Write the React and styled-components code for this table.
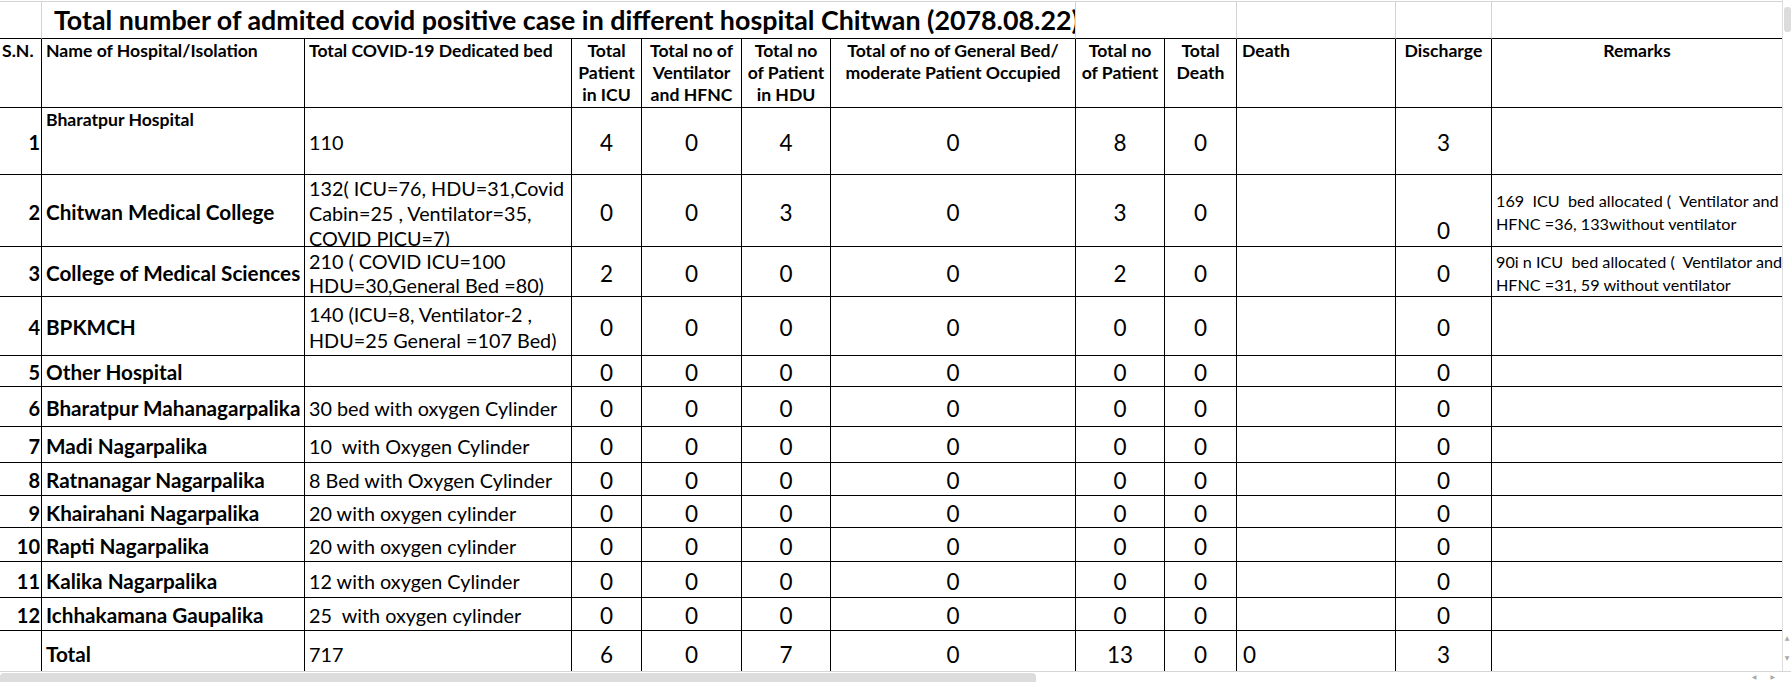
import React from 'react';
import styled, { createGlobalStyle } from 'styled-components';

const FONT = `Lato, "Open Sans", "Liberation Sans", sans-serif`;
const COLS = [42, 263, 267, 70, 100, 89, 245, 89, 72, 159, 96, 290];
const ROWS = [38, 69, 67, 72, 50, 59, 31, 40, 36, 33, 32, 34, 36, 33, 44];

const GlobalStyle = createGlobalStyle`
  html, body { margin: 0; padding: 0; background: #fff; }
  body { font-family: ${FONT}; color: #000; }
`;

const Sheet = styled.div`
  width: 1791px;
  height: 682px;
  display: flex;
  flex-direction: column;
  overflow: hidden;
  background: #fff;
`;

const Body = styled.div`
  flex: 1;
  min-height: 0;
  display: flex;
`;

const Grid = styled.div`
  width: 1782px;
  padding-top: 1px;
  display: grid;
  grid-template-columns: ${COLS.map((c) => c + 'px').join(' ')};
  grid-template-rows: ${ROWS.map((r) => r + 'px').join(' ')};
  align-content: start;
  overflow: hidden;
`;

const BaseCell = styled.div`
  box-sizing: border-box;
  overflow: hidden;
  white-space: pre;
  border-bottom: 1px solid #000;
  border-right: ${(p) => (p.$noRight ? 'none' : '1px solid #000')};
`;

const TitleGap = styled(BaseCell)`
  border-top: 1px solid #d4d4d4;
  border-right: ${(p) => (p.$noRight ? 'none' : '1px solid #d4d4d4')};
  grid-column: span ${(p) => p.$span || 1};
`;

const TitleCell = styled(TitleGap)`
  display: flex;
  align-items: center;
  padding-left: 12px;
  font-weight: 700;
  font-size: 26.8px;
`;

const HeadCell = styled(BaseCell)`
  font-weight: 700;
  font-size: 17.6px;
  line-height: 22px;
  padding: 1px ${(p) => p.$pad ?? 2}px 0;
  text-align: ${(p) => p.$align || 'center'};
`;

const SnCell = styled(BaseCell)`
  display: flex;
  align-items: center;
  justify-content: flex-end;
  padding: 2px 1px 0 0;
  font-weight: 700;
  font-size: 20px;
`;

const NameCell = styled(BaseCell)`
  display: flex;
  align-items: ${(p) => (p.$top ? 'flex-start' : 'center')};
  padding: ${(p) => (p.$top ? '1px' : '2px')} 0 0 4px;
  font-weight: 700;
  font-size: ${(p) => (p.$small ? '17.6px' : '20.7px')};
  line-height: ${(p) => (p.$small ? '22px' : '24px')};
`;

const BedCell = styled(BaseCell)`
  display: flex;
  align-items: ${(p) => (p.$top ? 'flex-start' : 'center')};
  padding: ${(p) => (p.$top ? '1px' : '2px')} 0 0 4px;
  font-size: 19.8px;
  line-height: ${(p) => p.$lh || 24}px;
`;

const NumCell = styled(BaseCell)`
  display: flex;
  align-items: ${(p) => (p.$bottom ? 'flex-end' : 'center')};
  justify-content: ${(p) => (p.$left ? 'flex-start' : 'center')};
  padding: ${(p) => (p.$bottom ? '0 0 2px' : '4px 0 0')} ${(p) => (p.$left ? '6px' : '0')};
  font-size: 22.5px;
  line-height: 26px;
`;

const RemarkCell = styled(BaseCell)`
  display: flex;
  align-items: center;
  padding: 2px 0 0 4px;
  font-size: 16.2px;
  line-height: 23px;
`;

const VScroll = styled.div`
  width: 9px;
  box-sizing: border-box;
  border-left: 1px solid #dcdcdc;
  display: flex;
  flex-direction: column;
  align-items: center;
`;

const VThumb = styled.div`
  margin-top: 7px;
  width: 7px;
  height: 25px;
  border-radius: 3px;
  background: #dcdcdc;
`;

const Spacer = styled.div`
  flex: 1;
`;

const Arrow = styled.span`
  display: block;
  font-family: "DejaVu Sans", sans-serif;
  font-size: 6px;
  line-height: 10px;
  color: #a8a8a8;
`;

const VArrows = styled.div`
  display: flex;
  flex-direction: column;
  align-items: center;
  margin-bottom: 8px;
  gap: 10px;
`;

const HScroll = styled.div`
  height: 11px;
  box-sizing: border-box;
  border-top: 1px solid #d6d6d6;
  display: flex;
  align-items: flex-end;
`;

const HThumb = styled.div`
  width: 1036px;
  height: 9px;
  border-radius: 4px 4px 0 0;
  background: #dcdcdc;
`;

const HArrows = styled.div`
  display: flex;
  align-items: center;
  gap: 14px;
  height: 10px;
  margin-right: 16px;
`;

const ZEROS = ['0', '0', '0', '0', '0', '0'];

const rows = [
  { sn: '1', name: 'Bharatpur Hospital', small: true, bed: ['110'], v: ['4', '0', '4', '0', '8', '0'], dis: '3', rem: [] },
  {
    sn: '2', name: 'Chitwan Medical College', bedTop: true,
    bed: ['132( ICU=76, HDU=31,Covid', 'Cabin=25 , Ventilator=35,', 'COVID PICU=7)'],
    lh: 25, v: ['0', '0', '3', '0', '3', '0'], dis: '0', disBottom: true,
    rem: ['169  ICU  bed allocated (  Ventilator and', 'HFNC =36, 133without ventilator'],
  },
  {
    sn: '3', name: 'College of Medical Sciences',
    bed: ['210 ( COVID ICU=100', 'HDU=30,General Bed =80)'],
    v: ['2', '0', '0', '0', '2', '0'], dis: '0',
    rem: ['90i n ICU  bed allocated (  Ventilator and', 'HFNC =31, 59 without ventilator'],
  },
  {
    sn: '4', name: 'BPKMCH',
    bed: ['140 (ICU=8, Ventilator-2 ,', 'HDU=25 General =107 Bed)'], lh: 26,
    v: ZEROS, dis: '0', rem: [],
  },
  { sn: '5', name: 'Other Hospital', bed: [''], v: ZEROS, dis: '0', rem: [] },
  { sn: '6', name: 'Bharatpur Mahanagarpalika', bed: ['30 bed with oxygen Cylinder'], v: ZEROS, dis: '0', rem: [] },
  { sn: '7', name: 'Madi Nagarpalika', bed: ['10  with Oxygen Cylinder'], v: ZEROS, dis: '0', rem: [] },
  { sn: '8', name: 'Ratnanagar Nagarpalika', bed: ['8 Bed with Oxygen Cylinder'], v: ZEROS, dis: '0', rem: [] },
  { sn: '9', name: 'Khairahani Nagarpalika', bed: ['20 with oxygen cylinder'], v: ZEROS, dis: '0', rem: [] },
  { sn: '10', name: 'Rapti Nagarpalika', bed: ['20 with oxygen cylinder'], v: ZEROS, dis: '0', rem: [] },
  { sn: '11', name: 'Kalika Nagarpalika', bed: ['12 with oxygen Cylinder'], v: ZEROS, dis: '0', rem: [] },
  { sn: '12', name: 'Ichhakamana Gaupalika', bed: ['25  with oxygen cylinder'], v: ZEROS, dis: '0', rem: [] },
];

const Lines = ({ lines }) => (
  <div>
    {lines.map((l, i) => (
      <div key={i}>{l}</div>
    ))}
  </div>
);

export default function App() {
  return (
    <>
      <GlobalStyle />
      <Sheet>
        <Body>
          <Grid>
            <TitleGap />
            <TitleCell $span={6}>
              Total number of admited covid positive case in different hospital Chitwan (2078.08.22)
            </TitleCell>
            <TitleGap $span={2} />
            <TitleGap />
            <TitleGap />
            <TitleGap $noRight />

            <HeadCell $align="left" $pad={2}>S.N.</HeadCell>
            <HeadCell $align="left" $pad={4}>Name of Hospital/Isolation</HeadCell>
            <HeadCell $align="left" $pad={4}>Total COVID-19 Dedicated bed</HeadCell>
            <HeadCell>{'Total\nPatient\nin ICU'}</HeadCell>
            <HeadCell>{'Total no of\nVentilator\nand HFNC'}</HeadCell>
            <HeadCell>{'Total no\nof Patient\nin HDU'}</HeadCell>
            <HeadCell>{'Total of no of General Bed/\nmoderate Patient Occupied'}</HeadCell>
            <HeadCell>{'Total no\nof Patient'}</HeadCell>
            <HeadCell>{'Total\nDeath'}</HeadCell>
            <HeadCell $align="left" $pad={5}>Death</HeadCell>
            <HeadCell>Discharge</HeadCell>
            <HeadCell $noRight>Remarks</HeadCell>

            {rows.map((r) => (
              <React.Fragment key={r.sn}>
                <SnCell>{r.sn}</SnCell>
                <NameCell $top={r.small} $small={r.small}>{r.name}</NameCell>
                <BedCell $top={r.bedTop} $lh={r.lh}>
                  <Lines lines={r.bed} />
                </BedCell>
                {r.v.map((n, i) => (
                  <NumCell key={i}>{n}</NumCell>
                ))}
                <NumCell />
                <NumCell $bottom={r.disBottom}>{r.dis}</NumCell>
                <RemarkCell $noRight>
                  <Lines lines={r.rem} />
                </RemarkCell>
              </React.Fragment>
            ))}

            <SnCell />
            <NameCell>Total</NameCell>
            <BedCell>
              <Lines lines={['717']} />
            </BedCell>
            {['6', '0', '7', '0', '13', '0'].map((n, i) => (
              <NumCell key={i}>{n}</NumCell>
            ))}
            <NumCell $left>0</NumCell>
            <NumCell>3</NumCell>
            <RemarkCell $noRight />
          </Grid>
          <VScroll>
            <VThumb />
            <Spacer />
            <VArrows>
              <Arrow>▲</Arrow>
              <Arrow>▼</Arrow>
            </VArrows>
          </VScroll>
        </Body>
        <HScroll>
          <HThumb />
          <Spacer />
          <HArrows>
            <Arrow>◀</Arrow>
            <Arrow>▶</Arrow>
          </HArrows>
        </HScroll>
      </Sheet>
    </>
  );
}
